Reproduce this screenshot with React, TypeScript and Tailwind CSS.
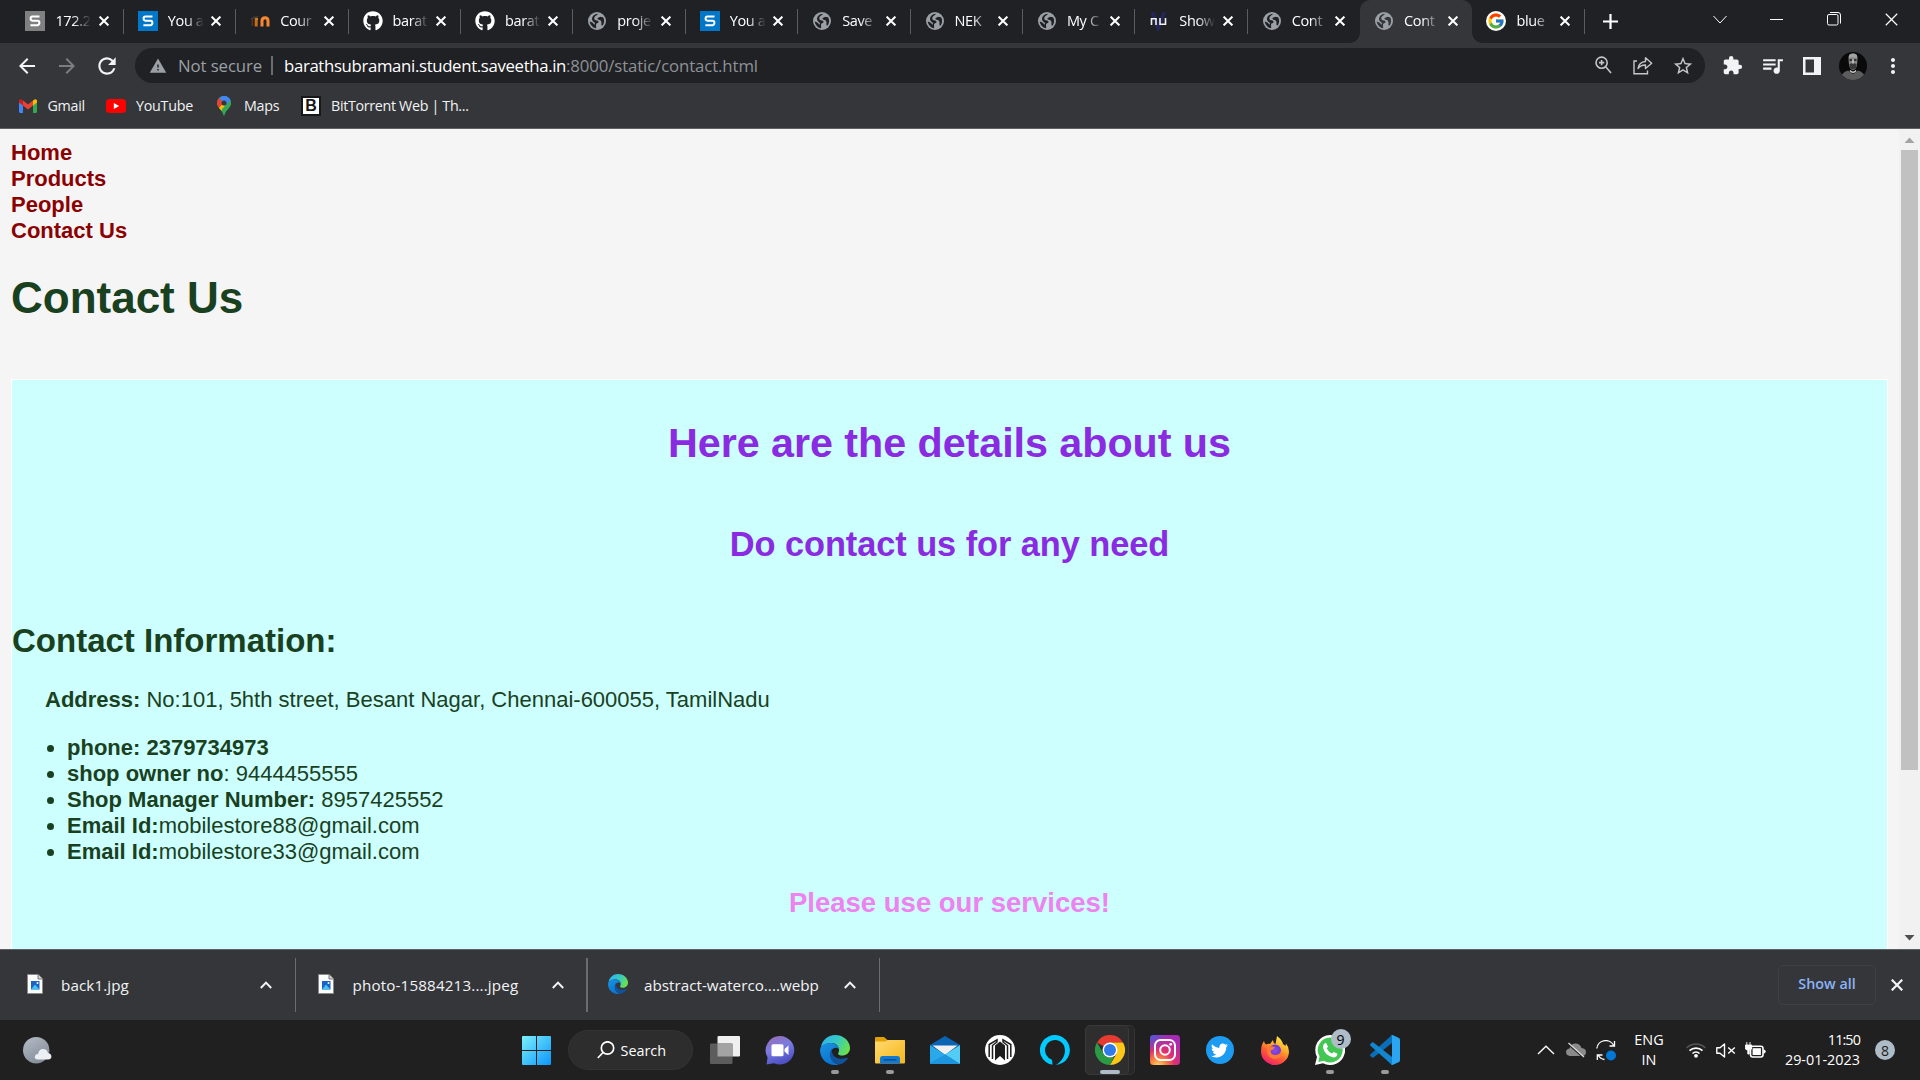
import React from 'react';
import {
  MdArrowBack,
  MdArrowForward,
  MdExtension,
  MdMoreVert,
  MdQueueMusic,
  MdRefresh,
  MdStarBorder,
  MdWarning,
} from 'react-icons/md';
import { FaGithub, FaTwitter } from 'react-icons/fa';
import { FcGoogle } from 'react-icons/fc';

/* ---------- favicons ---------- */

function SquareS({ gray }: { gray?: boolean }) {
  return (
    <svg width="20" height="20" viewBox="0 0 20 20">
      <rect width="20" height="20" fill={gray ? '#808080' : '#0077c8'} />
      <path d="M14.5 5.6H7.4Q5.6 5.6 5.6 7.6T7.4 9.7H12.6Q14.4 9.7 14.4 11.8T12.6 14.2H5.4" fill="none" stroke="#fff" strokeWidth="2" />
    </svg>
  );
}

function Moodle() {
  return (
    <svg width="20" height="20" viewBox="0 0 20 20" fill="none">
      <path d="M0 8L3.500 5.500L9 5L6 8.500Z" fill="#3d3a38" />
      <path d="M2.300 8V15" stroke="#5a3a20" strokeWidth="1.300" />
      <path d="M6.200 15.500V9" stroke="#c96a1a" strokeWidth="3" />
      <path d="M12 15.500V9.800Q12 6.800 15 6.800T18 9.800V15.500" stroke="#f7882f" strokeWidth="3" />
      <path d="M5 8H8" stroke="#e0761f" strokeWidth="2" />
    </svg>
  );
}

function Globe({ back = '#202124' }: { back?: string }) {
  return (
    <svg width="18" height="18" viewBox="0 0 18 18">
      <circle cx="9" cy="9" r="9" fill="#9aa0a6" />
      <path
        d="M10 1.800C9.500 3.300 6.200 3.800 6.300 6.500C6.400 8.800 9.300 8 10.300 9.200C11 10.200 10.200 11 9 11.300C7.800 11.600 8 13 8.200 16.200C4.600 15.800 1.900 12.800 1.800 9.300C3.200 10.600 4.800 10.200 5.300 11.300C5.600 12 5.900 12.500 6.800 12.400C7.200 11.300 6.800 10.700 5.800 10C4.200 9 3.600 7.300 4.300 5.300C5.300 3 7.500 1.900 10 1.800ZM12.200 4.800C13.200 5.200 14.800 5 15.400 5.800C16.600 8.300 16.300 11.300 14.600 13.500C13.900 13.600 13.200 13.100 13.400 12C13.600 10.600 13.600 9.300 12.300 8.300C11.400 7.500 9.700 7.800 9.400 6.700C9.300 5.500 11 5.800 12.200 4.800Z"
        fill={back}
      />
    </svg>
  );
}

function NuFavicon() {
  return (
    <svg width="20" height="20" viewBox="0 0 20 20" fill="none">
      <path d="M3.500 1L9 17L15.500 1" stroke="#25255e" strokeWidth="3.600" />
      <path d="M2.500 14V7.800H7V14M11 7V13.300H16.500V7" stroke="#f2f2f2" strokeWidth="1.600" />
    </svg>
  );
}

function GoogleFavicon() {
  return (
    <span className="flex size-5 items-center justify-center rounded-full bg-white">
      <FcGoogle size={18} />
    </span>
  );
}

function Cross({ size = 10, width = 2, color = '#fff' }: { size?: number; width?: number; color?: string }) {
  return (
    <svg width={size} height={size} viewBox="0 0 10 10">
      <path d="M.6 .6L9.400 9.400M9.400 .6L.6 9.400" stroke={color} strokeWidth={width} />
    </svg>
  );
}

/* ---------- browser chrome ---------- */

type Tab = { icon: React.ReactNode; title: string; active?: boolean; noDivider?: boolean };

const tabs: Tab[] = [
  { icon: <SquareS gray />, title: '172.2' },
  { icon: <SquareS />, title: 'You a' },
  { icon: <Moodle />, title: 'Cour' },
  { icon: <FaGithub size={20} color="#fff" />, title: 'barat' },
  { icon: <FaGithub size={20} color="#fff" />, title: 'barat' },
  { icon: <Globe />, title: 'proje' },
  { icon: <SquareS />, title: 'You a' },
  { icon: <Globe />, title: 'Save' },
  { icon: <Globe />, title: 'NEK' },
  { icon: <Globe />, title: 'My C' },
  { icon: <NuFavicon />, title: 'Show' },
  { icon: <Globe />, title: 'Cont', noDivider: true },
  { icon: <Globe back="#35363a" />, title: 'Cont', active: true, noDivider: true },
  { icon: <GoogleFavicon />, title: 'blue' },
];

function TabStrip() {
  return (
    <div className="flex h-[43px] bg-[#202124] pl-[11.4px]">
      {tabs.map((tab, i) => (
        <div
          key={i}
          className={
            'relative flex w-[112.400px] shrink-0 items-center pb-px pl-3.5 ' +
            (tab.active ? 'rounded-t-[10px] bg-[#35363a]' : '')
          }
        >
          {tab.active && (
            <>
              <span className="absolute bottom-0 -left-2.5 size-2.5 bg-[radial-gradient(circle_at_0_0,#202124_9.500px,#35363a_10px)]" />
              <span className="absolute -right-2.5 bottom-0 size-2.5 bg-[radial-gradient(circle_at_100%_0,#202124_9.500px,#35363a_10px)]" />
            </>
          )}
          <span className="flex w-5 shrink-0 justify-center">{tab.icon}</span>
          <span className="-mt-px ml-[10px] w-[36px] whitespace-nowrap text-[14.500px] leading-5 tracking-[-0.35px] text-white [mask-image:linear-gradient(to_right,#000_50%,transparent)]">
            {tab.title}
          </span>
          <span className="ml-[7.500px]">
            <Cross />
          </span>
          {!tab.noDivider && <span className="absolute top-[9px] right-0 h-[25px] w-px bg-[#5b5c60]" />}
        </div>
      ))}
      <span className="ml-[18px] flex items-center">
        <svg width="15" height="15" viewBox="0 0 15 15">
          <path d="M7.500 0V15M0 7.500H15" stroke="#fff" strokeWidth="2.200" />
        </svg>
      </span>
      <div className="ml-auto flex h-[38px] items-center">
        <span className="flex w-[57px] justify-center">
          <svg width="14" height="9" viewBox="0 0 14 9" fill="none" stroke="#fff">
            <path d="M.5 1L7 8L13.500 1" />
          </svg>
        </span>
        <span className="flex w-[57px] justify-center pr-0.5">
          <span className="h-px w-[13px] bg-white" />
        </span>
        <span className="flex w-[57px] justify-center">
          <svg width="14" height="14" viewBox="0 0 14 14" fill="none" stroke="#fff">
            <rect x=".5" y="2.500" width="10.500" height="10.500" rx="1.500" />
            <path d="M3 .5H11Q13.500 .5 13.500 3V11.500" />
          </svg>
        </span>
        <span className="mr-[.5px] flex w-[57px] justify-center">
          <Cross size={13} width={0.9} />
        </span>
      </div>
    </div>
  );
}

function Avatar() {
  return (
    <svg width="28" height="28" viewBox="0 0 28 28">
      <defs>
        <clipPath id="avatar-clip">
          <circle cx="14" cy="14" r="14" />
        </clipPath>
      </defs>
      <g clipPath="url(#avatar-clip)">
        <rect width="28" height="28" fill="#0a0a0a" />
        <path d="M1 28Q2 20.500 9 18.500L14 22L19 18.500Q26 20.500 27 28Z" fill="#5c5c5c" />
        <path d="M9.500 7Q9 1.500 14 1.500T18.500 7L18 13Q17 18 14 18T10 13Z" fill="#858585" />
        <path d="M10 3Q14 0 18 3L18 6Q14 4.500 10 6Z" fill="#a2a2a2" />
        <path d="M10.500 8H13M15 8H17.500" stroke="#171717" strokeWidth="1.300" />
        <path d="M10.300 12Q14 10.500 17.700 12L17 16Q14 19 11 16Z" fill="#383838" />
        <path d="M14 7.500V11.500" stroke="#c4c4c4" strokeWidth="1.500" />
        <path d="M11 18.500Q14 22 17 18.500" stroke="#d8d8d8" fill="none" strokeWidth="1.300" />
      </g>
    </svg>
  );
}

function Toolbar() {
  return (
    <div className="flex h-[45px] items-center bg-[#35363a] pl-[7px] text-[16.800px]">
      <span className="flex w-10 justify-center">
        <MdArrowBack size={24} color="#f1f3f4" />
      </span>
      <span className="flex w-10 justify-center">
        <MdArrowForward size={24} color="#7c7d80" />
      </span>
      <span className="flex w-10 justify-center">
        <MdRefresh size={26} color="#f1f3f4" />
      </span>
      <div className="ml-2 flex h-[35px] w-[1570px] items-center rounded-full bg-[#202124] pr-[2px] pl-[14px]">
        <MdWarning size={18} color="#9aa0a6" />
        <span className="ml-[11px] w-[94px] tracking-[-0.1px] whitespace-nowrap text-[#9aa0a6]">Not secure</span>
        <span className="-ml-px h-[19px] w-0.5 bg-[#6a6c70]" />
        <span className="ml-[11px] tracking-[-0.35px] whitespace-nowrap text-white">
          barathsubramani.student.saveetha.in
          <span className="tracking-[-0.12px] text-[#8e9297]">:8000/static/contact.html</span>
        </span>
        <div className="ml-auto flex">
          <span className="flex w-10 items-center justify-center">
            <svg width="17" height="19" viewBox="0 0 18 20" fill="none" stroke="#c4c7c9" strokeWidth="1.700">
              <circle cx="7" cy="7" r="5.900" />
              <path d="M11.300 11.300L17 18M4.200 7H9.800M7 4.200V9.800" />
            </svg>
          </span>
          <span className="flex w-10 items-center justify-center">
            <svg width="20" height="19" viewBox="0 0 20 19" fill="none" stroke="#c4c7c9" strokeWidth="1.400">
              <path d="M4 5H1V17.700H14.500V14.500" />
              <path d="M5 12.500Q6 6 12.500 5.500V1.800L18.700 7.300L12.500 12.500V9Q8 8.800 5 12.500Z" strokeLinejoin="round" />
            </svg>
          </span>
          <span className="flex w-10 items-center justify-center">
            <MdStarBorder size={22} color="#c4c7c9" />
          </span>
        </div>
      </div>
      <span className="ml-[7px] flex w-10 justify-center">
        <MdExtension size={21} color="#f1f3f4" />
      </span>
      <span className="flex w-10 justify-center">
        <MdQueueMusic size={25} color="#f1f3f4" />
      </span>
      <span className="flex w-10 justify-center">
        <svg width="18" height="18" viewBox="0 0 18 18">
          <path d="M0 0H18V18H0ZM2.500 2.500V15.500H11V2.500Z" fill="#f1f3f4" fillRule="evenodd" />
        </svg>
      </span>
      <span className="flex w-[41px] justify-center">
        <Avatar />
      </span>
      <span className="flex w-10 justify-center pr-px">
        <MdMoreVert size={24} color="#f1f3f4" />
      </span>
    </div>
  );
}

function Gmail() {
  return (
    <svg width="18" height="14" viewBox="0 0 18 14">
      <path d="M0 2V12.500Q0 14 1.500 14H4V5Z" fill="#4285f4" />
      <path d="M18 2V12.500Q18 14 16.500 14H14V5Z" fill="#34a853" />
      <path d="M4 1.500L9 5.500L14 1.500V6.500L9 10.500L4 6.500Z" fill="#ea4335" />
      <path d="M14 1.500L15.500 .4Q18 -.5 18 2V3.600L14 6.600Z" fill="#fbbc04" />
      <path d="M4 1.500L2.500 .4Q0 -.5 0 2V3.600L4 6.600Z" fill="#c5221f" />
    </svg>
  );
}

function Maps() {
  return (
    <svg width="14" height="20" viewBox="0 0 14 20">
      <defs>
        <clipPath id="pin-clip">
          <path d="M7 0A7 7 0 0 0 0 7C0 12 5.500 13.500 7 20C8.500 13.500 14 12 14 7A7 7 0 0 0 7 0Z" />
        </clipPath>
      </defs>
      <g clipPath="url(#pin-clip)">
        <rect width="14" height="20" fill="#34a853" />
        <path d="M0 0H14V5L7 7L0 0Z" fill="#4285f4" />
        <path d="M0 2L2 2L7 7L0 15Z" fill="#ea4335" />
        <path d="M0 14L9 4.500V11L3 16Z" fill="#fbbc04" />
        <path d="M7 0H14V4L7 12L9 5Z" fill="#4285f4" />
        <path d="M14 4V20H6L5 13Z" fill="#34a853" />
      </g>
      <circle cx="7" cy="7" r="2.500" fill="#35363a" />
    </svg>
  );
}

function Bookmarks() {
  return (
    <div className="flex h-10 items-center bg-[#35363a] pb-[5px] pl-[19px] text-[14.300px] tracking-[-0.27px] text-[#f1f3f4]">
      <Gmail />
      <span className="ml-[10.500px] w-[58.500px]">Gmail</span>
      <svg width="20" height="14" viewBox="0 0 20 14">
        <rect width="20" height="14" rx="3.500" fill="#f00" />
        <path d="M7.800 4L13.200 7L7.800 10Z" fill="#fff" />
      </svg>
      <span className="ml-[10px] w-[81px]">YouTube</span>
      <Maps />
      <span className="ml-[13px] w-[57px]">Maps</span>
      <span className="flex size-5 items-center justify-center border-2 border-[#17181a] bg-white text-[16px] font-bold text-[#17181a] [font-family:'Liberation_Sans',sans-serif]">
        B
      </span>
      <span className="ml-[10px] whitespace-nowrap tracking-[-0.33px]">BitTorrent Web | Th...</span>
    </div>
  );
}

/* ---------- web page ---------- */

const details: { label: string; value: string }[] = [
  { label: 'phone: 2379734973', value: '' },
  { label: 'shop owner no', value: ': 9444455555' },
  { label: 'Shop Manager Number:', value: ' 8957425552' },
  { label: 'Email Id:', value: 'mobilestore88@gmail.com' },
  { label: 'Email Id:', value: 'mobilestore33@gmail.com' },
];

function Page() {
  return (
    <div className="flex h-[820px] overflow-hidden bg-[#f5f5f5] text-[22px] leading-[26px] text-[#1a411f] [font-family:'Liberation_Sans',Arial,sans-serif]">
      <main className="w-[1899px] px-[11px] pt-[11px]">
        <nav className="flex flex-col items-start font-bold text-[#8b0000]">
          <a>Home</a>
          <a>Products</a>
          <a>People</a>
          <a>Contact Us</a>
        </nav>
        <h1 className="mt-7 text-[44px] leading-[51px] font-bold">Contact Us</h1>
        <section className="mt-14 h-[700px] border border-white bg-[#ccfffe]">
          <h1 className="mt-[39px] text-center text-[41.250px] leading-[48px] font-bold tracking-[-0.040px] text-[#8a2be2]">
            Here are the details about us
          </h1>
          <h2 className="mt-[57px] text-center text-[34.375px] leading-[40px] font-bold tracking-[-0.060px] text-[#8a2be2]">
            Do contact us for any need
          </h2>
          <h2 className="mt-[58px] text-[33px] leading-[38px] font-bold">Contact Information:</h2>
          <p className="mt-[27px] ml-[33px]">
            <b>Address:</b> No:101, 5hth street, Besant Nagar, Chennai-600055, TamilNadu
          </p>
          <ul className="mt-[22px] ml-[35px]">
            {details.map((d, i) => (
              <li key={i} className="flex items-center">
                <span className="mt-px mr-[13px] size-[7px] rounded-full bg-[#1a411f]" />
                <span className="whitespace-pre">
                  <b>{d.label}</b>
                  {d.value}
                </span>
              </li>
            ))}
          </ul>
          <h3 className="mt-[22px] text-center text-[27.500px] leading-8 font-bold text-[#ee82ee]">
            Please use our services!
          </h3>
        </section>
      </main>
      <div className="flex w-[21px] flex-col items-center bg-[#f1f1f1]">
        <svg width="21" height="21" viewBox="0 0 21 21">
          <path d="M5.500 14L10.500 8.500L15.500 14Z" fill="#a3a3a3" />
        </svg>
        <div className="h-[620px] w-[17px] bg-[#c1c1c1]" />
        <svg width="21" height="21" viewBox="0 0 21 21" className="mt-auto mb-px">
          <path d="M5.500 8L10.500 13.500L15.500 8Z" fill="#505050" />
        </svg>
      </div>
    </div>
  );
}

/* ---------- downloads ---------- */

function ImageFile() {
  return (
    <svg width="16" height="20" viewBox="0 0 16 20">
      <path d="M.5 .5H11L15.500 5V19.500H.5Z" fill="#fdfdfd" stroke="#8a8a88" />
      <path d="M11 .5V5H15.500" fill="#d5d5d5" stroke="#777" />
      <rect x="4" y="7" width="8.500" height="8.500" fill="#1a62c4" />
      <path d="M4 15.500L8 10.500L12.500 15.500Z" fill="#46c3f5" />
      <circle cx="10.500" cy="9" r="1" fill="#fff" />
    </svg>
  );
}

function Edge({ size, id }: { size: number; id: string }) {
  return (
    <svg width={size} height={size} viewBox="0 0 30 30">
      <defs>
        <linearGradient id={id + 'a'} x1="0" y1="0.200" x2="1" y2="0.600">
          <stop offset="0" stopColor="#2fb3ee" />
          <stop offset=".5" stopColor="#36c8c4" />
          <stop offset="1" stopColor="#6be34a" />
        </linearGradient>
        <linearGradient id={id + 'b'} x1="0" y1="0" x2="0.500" y2="1">
          <stop offset="0" stopColor="#1a93e0" />
          <stop offset="1" stopColor="#0a74d0" />
        </linearGradient>
      </defs>
      <path d="M1 12C2 5 8 0 15 0C24 0 30 6.500 30 13C30 18 26 20.500 22 20.500C18.500 20.500 17.500 19 18.500 17.500C20 15 19 9 12 8C7 7.500 3 10 1 12Z" fill={`url(#${id}a)`} />
      <path d="M0 15C0 11 5 7.500 11 8C16 8.300 19 12 19.200 14.500C17 11.500 11.500 12.500 10.500 18C9.500 23 13 28.500 19 29.400C9 32 0 25 0 15Z" fill={`url(#${id}b)`} />
      <path d="M12 13.500C8 18 10 28 19 29.500C23 28.800 26 26.500 28 23.300C27.500 22.500 27 22.800 26 23C17 26 10.500 20 12 13.500Z" fill="#10529c" />
    </svg>
  );
}

function Caret() {
  return (
    <svg width="12" height="8" viewBox="0 0 12 8" fill="none" stroke="#f1f3f4" strokeWidth="2">
      <path d="M.8 7L6 1.600L11.200 7" />
    </svg>
  );
}

function Downloads() {
  return (
    <div className="flex h-[71px] items-center border-t border-[#5f6063] bg-[#35363a] text-[15.200px] text-[#f1f3f4]">
      <div className="flex h-[54px] w-[296px] items-center border-r border-[#6b6c70] pr-[23px] pl-[27px]">
        <span className="-mt-0.5"><ImageFile /></span>
        <span className="ml-[18px] tracking-[0.100px]">back1.jpg</span>
        <span className="ml-auto"><Caret /></span>
      </div>
      <div className="flex h-[54px] w-[292px] items-center border-r-2 border-[#6b6c70] pr-[22px] pl-[22px]">
        <span className="-mt-0.5"><ImageFile /></span>
        <span className="ml-[18.500px] tracking-[0.150px]">photo-15884213....jpeg</span>
        <span className="ml-auto"><Caret /></span>
      </div>
      <div className="flex h-[54px] w-[292px] items-center border-r border-[#6b6c70] pr-[23px] pl-5">
        <span className="-mt-0.5"><Edge size={20} id="edge-sm" /></span>
        <span className="ml-4 tracking-[0.030px]">abstract-waterco....webp</span>
        <span className="ml-auto"><Caret /></span>
      </div>
      <div className="mr-[15px] ml-auto flex h-10 w-[98px] items-center justify-center rounded-[5px] border border-[#3f4044] pb-0.5 text-[14.300px] font-semibold text-[#8ab4f8]">
        Show all
      </div>
      <span className="mr-[17px] pb-px">
        <Cross size={12} width={1.900} color="#f1f3f4" />
      </span>
    </div>
  );
}

/* ---------- taskbar ---------- */

function Weather() {
  return (
    <svg width="29" height="27" viewBox="0 0 29 27">
      <defs>
        <linearGradient id="moon" x1="0" y1="0" x2="0.600" y2="1">
          <stop offset="0" stopColor="#b5bdc9" />
          <stop offset="1" stopColor="#858d98" />
        </linearGradient>
      </defs>
      <circle cx="13.200" cy="13.200" r="13.200" fill="url(#moon)" />
      <path d="M14.500 22.500Q11.500 22 11.800 19.400Q12.200 17 15 17Q16 12 20 12Q24 12 25 16Q28.400 16.500 28.400 19.500T25 22.500Z" fill="#eceff3" />
    </svg>
  );
}

function WindowsLogo() {
  return (
    <svg width="29" height="29" viewBox="0 0 29 29">
      <defs>
        <linearGradient id="win" x1="0" y1="0" x2="1" y2="1">
          <stop offset="0" stopColor="#7df0fb" />
          <stop offset="1" stopColor="#0a95fb" />
        </linearGradient>
      </defs>
      <path d="M1 0H14V14H0V1Q0 0 1 0ZM15 0H28Q29 0 29 1V14H15ZM0 15H14V29H1Q0 29 0 28ZM15 15H29V28Q29 29 28 29H15Z" fill="url(#win)" />
    </svg>
  );
}

function TaskView() {
  return (
    <svg width="30" height="28" viewBox="0 0 30 28">
      <rect x="7.500" y="0" width="22.500" height="20.500" rx="1" fill="#efefef" />
      <rect x="0" y="7.500" width="22.500" height="20.500" rx="1" fill="#5c5c5c" />
      <path d="M7.500 7.500H22.500V20.500H7.500Z" fill="#a3a3a3" />
    </svg>
  );
}

function Chat() {
  return (
    <svg width="30" height="29" viewBox="0 0 30 29">
      <defs>
        <linearGradient id="chat" x1="0" y1="0" x2="0.400" y2="1">
          <stop offset="0" stopColor="#9a6db0" />
          <stop offset=".5" stopColor="#7b7be0" />
          <stop offset="1" stopColor="#4f52c4" />
        </linearGradient>
      </defs>
      <path d="M15 0A14.300 14.300 0 1 1 9 27.300L1.500 28.500L2.600 21.500A14.300 14.300 0 0 1 15 0Z" fill="url(#chat)" />
      <rect x="6.500" y="8.200" width="12" height="12" rx="1.500" fill="#fff" />
      <path d="M19.500 13L23.500 9.500V19L19.500 15.500Z" fill="#fff" />
    </svg>
  );
}

function Explorer() {
  return (
    <svg width="30" height="28" viewBox="0 0 30 28">
      <defs>
        <linearGradient id="folder" x1="0" y1="0" x2="1" y2="1">
          <stop offset="0" stopColor="#ffda70" />
          <stop offset="1" stopColor="#f5b61a" />
        </linearGradient>
      </defs>
      <path d="M0 7V2Q0 1 1 1H9L12.500 4H29Q30 4 30 5V10H0Z" fill="#e2a007" />
      <path d="M0 5.500H10L13 4H29Q30 4 30 5V26.500Q30 27.500 29 27.500H1Q0 27.500 0 26.500Z" fill="url(#folder)" />
      <path d="M5 27.500V22.500Q5 20 7.500 20H22.500Q25 20 25 22.500V27.500Z" fill="#127ad2" />
      <path d="M8.500 23.800H21.500" stroke="#0b4f93" strokeWidth="1.500" />
    </svg>
  );
}

function Mail() {
  return (
    <svg width="30" height="28" viewBox="0 0 30 28">
      <path d="M0 9L15 0L30 9L15 18Z" fill="#0a64b4" />
      <path d="M2.500 9.500H27.500L15 19Z" fill="#f0f0f0" />
      <path d="M0 9L30 28H1Q0 28 0 27Z" fill="#29a9ea" />
      <path d="M30 9L15 18.500L30 28Z" fill="#52cdf8" />
      <path d="M0 27L15 18.500L30 28H1Z" fill="#1d95df" />
    </svg>
  );
}

function RoundArrow() {
  return (
    <svg width="30" height="30" viewBox="0 0 30 30">
      <circle cx="15" cy="15" r="15" fill="#fff" />
      <g fill="none" stroke="#1c1c1c" strokeWidth="1.500">
        <path d="M4.200 22V9.500L12 4.800V7L7.500 10.500V24" />
        <path d="M25.800 22V9.500L18 4.800V7L22.500 10.500V24" />
      </g>
      <path d="M10 25.500V10.500L15 6.500L20 10.500V25.500L15 21Z" fill="#1c1c1c" />
    </svg>
  );
}

function Alexa() {
  return (
    <svg width="30" height="30" viewBox="0 0 30 30">
      <path d="M12.400 27.500V29.800A15 15 0 1 1 15.500 30C21 27.500 25 21.500 25 15A10 10 0 1 0 11.500 24.400Q12.400 25 12.400 27.500Z" fill="#00caff" />
    </svg>
  );
}

function Chrome() {
  return (
    <svg width="30" height="30" viewBox="0 0 30 30">
      <path d="M15 15L2 7.500A15 15 0 0 1 28 7.500H15Z" fill="#e53c2f" />
      <path d="M15 7.500H28A15 15 0 0 1 15 30L21.500 18.800Z" fill="#fcc717" />
      <path d="M2 7.500L8.500 18.800Q11 22.500 15 22.500L19 22L15 30A15 15 0 0 1 2 7.500Z" fill="#2a9a45" />
      <circle cx="15" cy="15" r="7.500" fill="#fff" />
      <circle cx="15" cy="15" r="6" fill="#2f7bea" />
    </svg>
  );
}

function Instagram() {
  return (
    <svg width="30" height="30" viewBox="0 0 30 30">
      <defs>
        <radialGradient id="ig" cx="0.270" cy="1.050" r="1">
          <stop offset="0" stopColor="#ffdc7d" />
          <stop offset=".25" stopColor="#fb8a3c" />
          <stop offset=".55" stopColor="#e0306f" />
          <stop offset="1" stopColor="#a92bb4" />
        </radialGradient>
        <radialGradient id="ig-blue" cx="0" cy="0" r="0.550">
          <stop offset="0" stopColor="#4a5bd6" />
          <stop offset="1" stopColor="#4a5bd6" stopOpacity="0" />
        </radialGradient>
      </defs>
      <rect width="30" height="30" rx="3.500" fill="url(#ig)" />
      <rect width="30" height="30" rx="3.500" fill="url(#ig-blue)" />
      <g fill="none" stroke="#fff" strokeWidth="2">
        <rect x="5" y="5" width="20" height="20" rx="5.500" />
        <circle cx="15" cy="15" r="4.800" />
      </g>
      <circle cx="20.700" cy="9.300" r="1.400" fill="#fff" />
    </svg>
  );
}

function Firefox() {
  return (
    <svg width="28" height="29" viewBox="0 0 28 29">
      <defs>
        <linearGradient id="fx" x1="0.800" y1="0" x2="0.250" y2="1">
          <stop offset="0" stopColor="#fff34f" />
          <stop offset=".35" stopColor="#ffb02c" />
          <stop offset=".65" stopColor="#ff5a35" />
          <stop offset="1" stopColor="#ee1a72" />
        </linearGradient>
        <radialGradient id="fx-core">
          <stop offset="0" stopColor="#8b4be8" />
          <stop offset="1" stopColor="#6a3bd0" />
        </radialGradient>
      </defs>
      <path d="M3 5Q3.500 8 5 8.500Q7 7.500 9 8L12 4Q12 7 14.500 8L16 0Q20.500 3 22 8L24.500 10L25 7.500Q28 11 28 15.500A14 13.500 0 0 1 0 15.500Q0 9 3 5Z" fill="url(#fx)" />
      <circle cx="14" cy="14.500" r="6" fill="url(#fx-core)" />
      <path d="M6 11Q10 9.500 14 11.500Q12 14 9.500 14.500Q10 19.500 15 19Q19 18.500 20 15Q22 22 14 23Q5 22.500 6 11Z" fill="#ff7a33" />
    </svg>
  );
}

function WhatsApp() {
  return (
    <span className="relative">
      <svg width="30" height="30" viewBox="0 0 30 30">
        <path d="M15 0A15 15 0 1 1 8 28.200L0 30L2 22A15 15 0 0 1 15 0Z" fill="#fff" />
        <path d="M15 2.500A12.500 12.500 0 1 1 8.800 25.800L3.300 27L4.600 21.500A12.500 12.500 0 0 1 15 2.500Z" fill="#43c654" />
        <path d="M9.500 8.500L11 7.800L13 11.500L11.800 13.500Q13.500 17 17 18.500L18.800 17L22.500 18.800Q22 22.500 18.500 22.500Q9.500 20.500 8 12.500Q8 9.500 9.500 8.500Z" fill="#fff" />
      </svg>
      <span className="absolute -top-1.5 -right-1.5 flex size-5 items-center justify-center rounded-full bg-[#adbcc6] text-[14px] text-black">
        9
      </span>
    </span>
  );
}

function VSCode() {
  return (
    <svg width="30" height="30" viewBox="0 0 30 30">
      <path d="M22 0L22 8L3.500 22.500Q2.500 23 1.700 22.300L.4 21Q-.3 20 .5 19.200Z" fill="#0a6fb8" />
      <path d="M22 30V22L3.500 7.500Q2.500 7 1.700 7.700L.4 9Q-.3 10 .5 10.800Z" fill="#1286cf" />
      <path d="M21 .5L22.500 0L29 3Q30 3.600 30 5V25Q30 26.500 29 27L22.500 30L21 29.500Q22 29.500 22 28V2Q22 .8 21 .5Z" fill="#2aa5f2" />
    </svg>
  );
}

const apps: { icon: React.ReactNode; mark?: 'open' | 'active' }[] = [
  { icon: <TaskView /> },
  { icon: <Chat /> },
  { icon: <Edge size={30} id="edge-lg" />, mark: 'open' },
  { icon: <Explorer />, mark: 'open' },
  { icon: <Mail /> },
  { icon: <RoundArrow /> },
  { icon: <Alexa /> },
  { icon: <Chrome />, mark: 'active' },
  { icon: <Instagram /> },
  {
    icon: (
      <span className="flex size-7 items-center justify-center rounded-full bg-[#1d9bf0]">
        <FaTwitter size={17} color="#fff" />
      </span>
    ),
  },
  { icon: <Firefox /> },
  { icon: <WhatsApp />, mark: 'open' },
  { icon: <VSCode />, mark: 'open' },
];

function Taskbar() {
  return (
    <div className="flex h-[60px] items-center bg-[#202020] text-[14.400px] text-white">
      <span className="ml-[23px] w-[499px]">
        <Weather />
      </span>
      <WindowsLogo />
      <div className="ml-[17px] flex h-10 w-[125px] items-center rounded-full border border-[#333] bg-[#2d2d2d] pl-[28px]">
        <svg width="18" height="18" viewBox="0 0 18 18" fill="none" stroke="#fff" strokeWidth="1.700">
          <circle cx="10.500" cy="7" r="6.200" />
          <path d="M6 11.500L.8 17" />
        </svg>
        <span className="mt-px ml-[5.500px]">Search</span>
      </div>
      <div className="ml-[4px] flex h-full">
        {apps.map((app, i) => (
          <div key={i} className="relative flex w-[55px] items-center justify-center">
            {app.mark === 'active' && (
              <>
                <span className="absolute top-[5px] left-[7px] h-[50px] w-[45.500px] rounded-[5px] border border-[#343434] bg-[#272727]" />
                <span className="absolute top-[5px] left-[2.500px] h-[50px] w-[44px] rounded-[5px] border border-[#3a3a3a] bg-[#2e2e2e]" />
              </>
            )}
            <span className="relative flex">{app.icon}</span>
            {app.mark === 'open' && <span className="absolute bottom-1.5 h-1 w-2 rounded-full bg-[#9a9a9a]" />}
            {app.mark === 'active' && <span className="absolute bottom-1.5 h-1 w-5 rounded-full bg-[#adbcc6]" />}
          </div>
        ))}
      </div>
      <div className="mr-[25px] ml-auto flex items-center">
        <svg width="18" height="10" viewBox="0 0 18 10" fill="none" stroke="#fff" strokeWidth="1.300">
          <path d="M1 9L9 1.200L17 9" />
        </svg>
        <svg width="20" height="16" viewBox="0 0 20 16" className="ml-[11px]">
          <path d="M4 14Q0 13.500 0 10Q0 7 3.500 6.500Q5 1.500 9.500 1.500Q14 1.500 15.500 6Q20 6.500 20 10Q20 14 16 14Z" fill="#8a8a8a" />
          <path d="M1.800 1.600L17.300 15.600" stroke="#202020" strokeWidth="1.500" />
          <path d="M2.500 1L18 15" stroke="#dcdcdc" strokeWidth="1.300" />
        </svg>
        <svg width="20" height="21" viewBox="0 0 20 21" fill="none" stroke="#fff" strokeWidth="1.300" className="ml-[10px]">
          <path d="M.8 8.500A9 9 0 0 1 18 6M18.500 1V6H13.500M8.500 19.500Q4 18.800 2 15M1.300 20V15H6.500" />
          <circle cx="15" cy="15.500" r="5" fill="#0078d7" stroke="none" />
        </svg>
        <span className="ml-[13px] flex w-10 flex-col items-center leading-5">
          <span>ENG</span>
          <span>IN</span>
        </span>
        <svg width="20" height="16" viewBox="0 0 20 16" fill="none" stroke="#fff" strokeWidth="1.700" className="ml-[17px]">
          <path d="M.8 5.800A13 13 0 0 1 19.200 5.800" stroke="#555" />
          <path d="M3.500 8.700A9.300 9.300 0 0 1 16.500 8.700M6.500 11.500A5 5 0 0 1 13.500 11.500" />
          <circle cx="10" cy="13.800" r="1.900" fill="#fff" stroke="none" />
        </svg>
        <svg width="20" height="15" viewBox="0 0 20 15" fill="none" stroke="#fff" strokeWidth="1.400" className="ml-[10px]">
          <path d="M.8 4.800H4L8.500 1V14L4 10.200H.8Z" strokeLinejoin="round" />
          <path d="M12.200 4.500L18.800 10.500M18.800 4.500L12.200 10.500" />
        </svg>
        <svg width="21" height="17" viewBox="0 0 21 17" className="ml-[9px]">
          <rect x="5.500" y="4.200" width="12.500" height="10.800" rx="2.200" fill="none" stroke="#fff" strokeWidth="1.600" />
          <rect x="7.600" y="6.200" width="8.300" height="6.800" fill="#fff" />
          <path d="M18.500 7.500Q20.700 7.500 20.700 9.600T18.500 11.700Z" fill="#fff" />
          <path d="M1.800 0V3M5 0V3M.3 3H6.700V6Q6.700 8 4.200 8V12H2.800V8Q.3 8 .3 6Z" fill="#fff" stroke="#fff" strokeWidth=".9" />
        </svg>
        <span className="ml-[14px] flex w-20 flex-col items-end leading-5">
          <span className="tracking-[-0.900px]">11:50</span>
          <span>29-01-2023</span>
        </span>
        <span className="ml-[15px] flex size-5 items-center justify-center rounded-full bg-[#adbcc6] text-[14px] text-[#202020]">
          8
        </span>
      </div>
    </div>
  );
}

export default function App() {
  return (
    <div className="h-[1080px] w-[1920px] overflow-hidden bg-[#35363a] [font-family:'Open_Sans','Noto_Sans',sans-serif]">
      <TabStrip />
      <Toolbar />
      <Bookmarks />
      <div className="h-px bg-[#5f6063]" />
      <Page />
      <Downloads />
      <Taskbar />
    </div>
  );
}
